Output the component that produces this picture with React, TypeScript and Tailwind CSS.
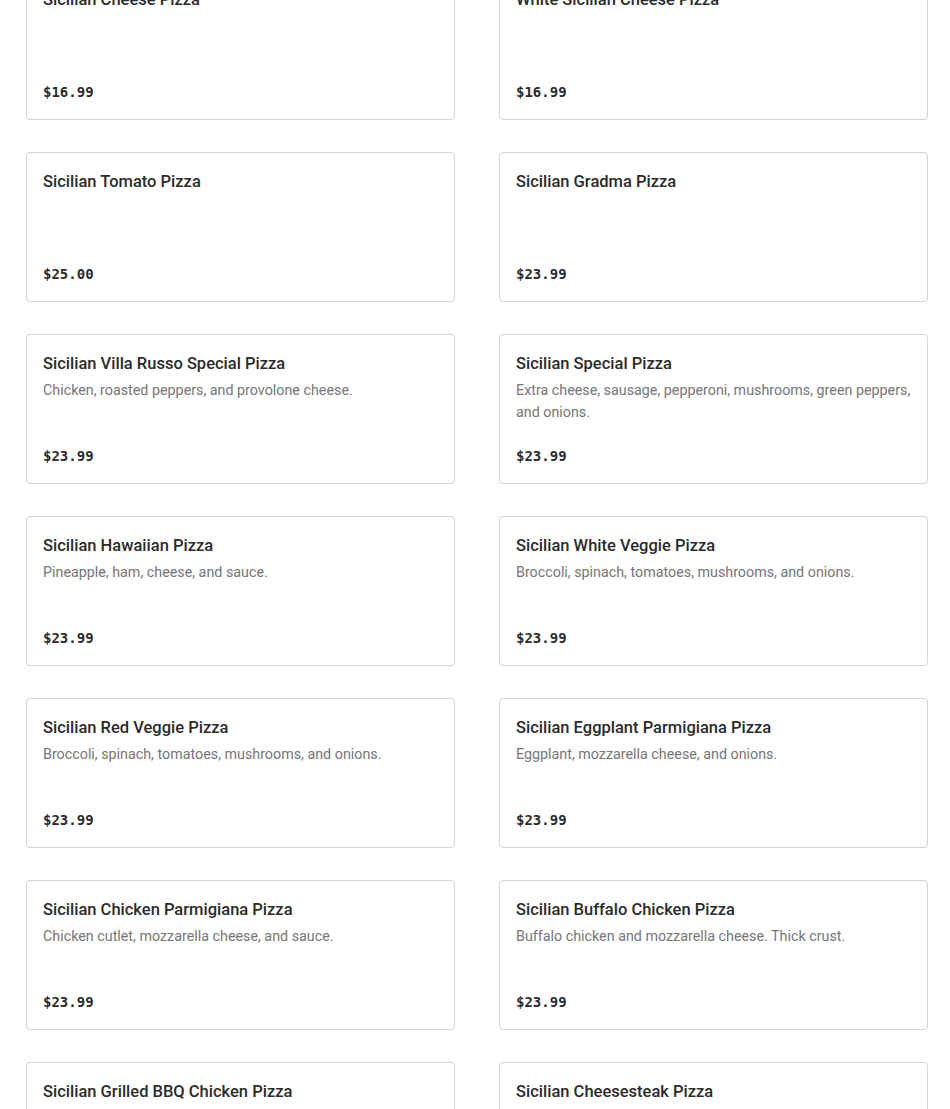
const items = [
  { name: 'Sicilian Cheese Pizza', desc: '', price: '$16.99' },
  { name: 'White Sicilian Cheese Pizza', desc: '', price: '$16.99' },
  { name: 'Sicilian Tomato Pizza', desc: '', price: '$25.00' },
  { name: 'Sicilian Gradma Pizza', desc: '', price: '$23.99' },
  { name: 'Sicilian Villa Russo Special Pizza', desc: 'Chicken, roasted peppers, and provolone cheese.', price: '$23.99' },
  { name: 'Sicilian Special Pizza', desc: 'Extra cheese, sausage, pepperoni, mushrooms, green peppers, and onions.', price: '$23.99' },
  { name: 'Sicilian Hawaiian Pizza', desc: 'Pineapple, ham, cheese, and sauce.', price: '$23.99' },
  { name: 'Sicilian White Veggie Pizza', desc: 'Broccoli, spinach, tomatoes, mushrooms, and onions.', price: '$23.99' },
  { name: 'Sicilian Red Veggie Pizza', desc: 'Broccoli, spinach, tomatoes, mushrooms, and onions.', price: '$23.99' },
  { name: 'Sicilian Eggplant Parmigiana Pizza', desc: 'Eggplant, mozzarella cheese, and onions.', price: '$23.99' },
  { name: 'Sicilian Chicken Parmigiana Pizza', desc: 'Chicken cutlet, mozzarella cheese, and sauce.', price: '$23.99' },
  { name: 'Sicilian Buffalo Chicken Pizza', desc: 'Buffalo chicken and mozzarella cheese. Thick crust.', price: '$23.99' },
  { name: 'Sicilian Grilled BBQ Chicken Pizza', desc: '', price: '$23.99' },
  { name: 'Sicilian Cheesesteak Pizza', desc: '', price: '$23.99' },
];

const MenuCard = ({ name, desc, price }: { name: string; desc: string; price: string }) => (
  <div className="flex h-[150px] flex-col justify-between rounded-[4px] border border-[#d3d3d3] bg-white px-4 pt-[17px] pb-[17px]">
    <div>
      <div className="text-[16.5px] leading-6 font-medium text-[#2b2b2b]">{name}</div>
      {desc && <p className="mt-[3px] text-[14.3px] leading-[22px] text-[#767676]">{desc}</p>}
    </div>
    <div className="font-['DejaVu_Sans_Mono',monospace] text-[14px] leading-5 font-bold text-[#2b2b2b]">{price}</div>
  </div>
);

export default function App() {
  return (
    <div className="h-[1109px] overflow-hidden bg-white font-['Roboto',sans-serif]">
      <div className="-mt-[30px] grid grid-cols-[429px_429px] gap-x-[44px] gap-y-8 pl-[26px]">
        {items.map((it) => (
          <MenuCard key={it.name} {...it} />
        ))}
      </div>
    </div>
  );
}
